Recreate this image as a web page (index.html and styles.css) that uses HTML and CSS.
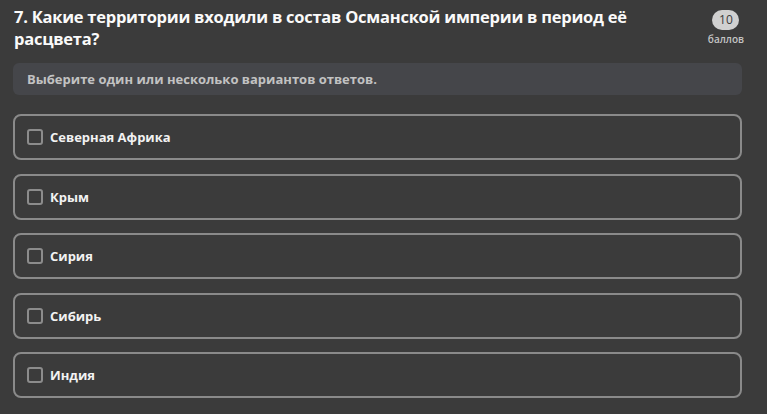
FILE: index.html
```html
<!DOCTYPE html>
<html lang="ru">
<head>
  <meta charset="UTF-8" />
  <meta name="viewport" content="width=device-width, initial-scale=1.0"/>
  <title>Вопрос 7</title>
  <link rel="stylesheet" href="styles.css">
</head>
<body>
  <div class="question">
    <div class="question-head">
      <h2>7. Какие территории входили в состав Османской империи в период её расцвета?</h2>
      <div class="points">
        <span class="points-num">10</span>
        <span class="points-label">баллов</span>
      </div>
    </div>

    <div class="hint">Выберите один или несколько вариантов ответов.</div>

    <div class="options">
      <label class="option"><span class="check"></span>Северная Африка</label>
      <label class="option"><span class="check"></span>Крым</label>
      <label class="option"><span class="check"></span>Сирия</label>
      <label class="option"><span class="check"></span>Сибирь</label>
      <label class="option"><span class="check"></span>Индия</label>
    </div>
  </div>
</body>
</html>
```

FILE: styles.css
```css
* {
    margin: 0;
    padding: 0;
    box-sizing: border-box;
    font-family: 'Open Sans', 'Noto Sans', sans-serif;
}
body {
    background: #3b3b3b;
    color: #fff;
}
.question {
    padding: 6px 25px 0 13px;
}
.question-head {
    display: flex;
    justify-content: space-between;
    align-items: flex-start;
}
h2 {
    font-size: 16.5px;
    font-weight: 700;
    line-height: 22px;
    letter-spacing: -0.25px;
    padding-left: 1px;
    max-width: 660px;
    color: #fafafa;
}
.points {
    display: flex;
    flex-direction: column;
    align-items: center;
    padding-top: 4px;
    margin-right: -2px;
}
.points-num {
    background: #d0d0d0;
    color: #3b3b3b;
    font-size: 12px;
    line-height: 20px;
    width: 27px;
    border-radius: 10px;
    text-align: center;
}
.points-label {
    font-size: 10px;
    font-weight: 600;
    color: #c4c4c4;
    margin-top: 2px;
}
.hint {
    margin-top: 13px;
    background: #45464a;
    border-radius: 6px;
    height: 32px;
    line-height: 32px;
    padding-left: 14px;
    font-size: 13px;
    font-weight: 700;
    color: #c2c2c2;
}
.options {
    display: flex;
    flex-direction: column;
    gap: 13.5px;
    margin-top: 19px;
}
.option {
    display: flex;
    align-items: center;
    height: 46px;
    border: 2px solid #8a8a8a;
    border-radius: 8px;
    padding-left: 12px;
    font-size: 13px;
    font-weight: 700;
    color: #f2f2f2;
}
.check {
    width: 16px;
    height: 16px;
    border: 2px solid #8c8c8c;
    border-radius: 3px;
    margin-right: 7px;
}
```
